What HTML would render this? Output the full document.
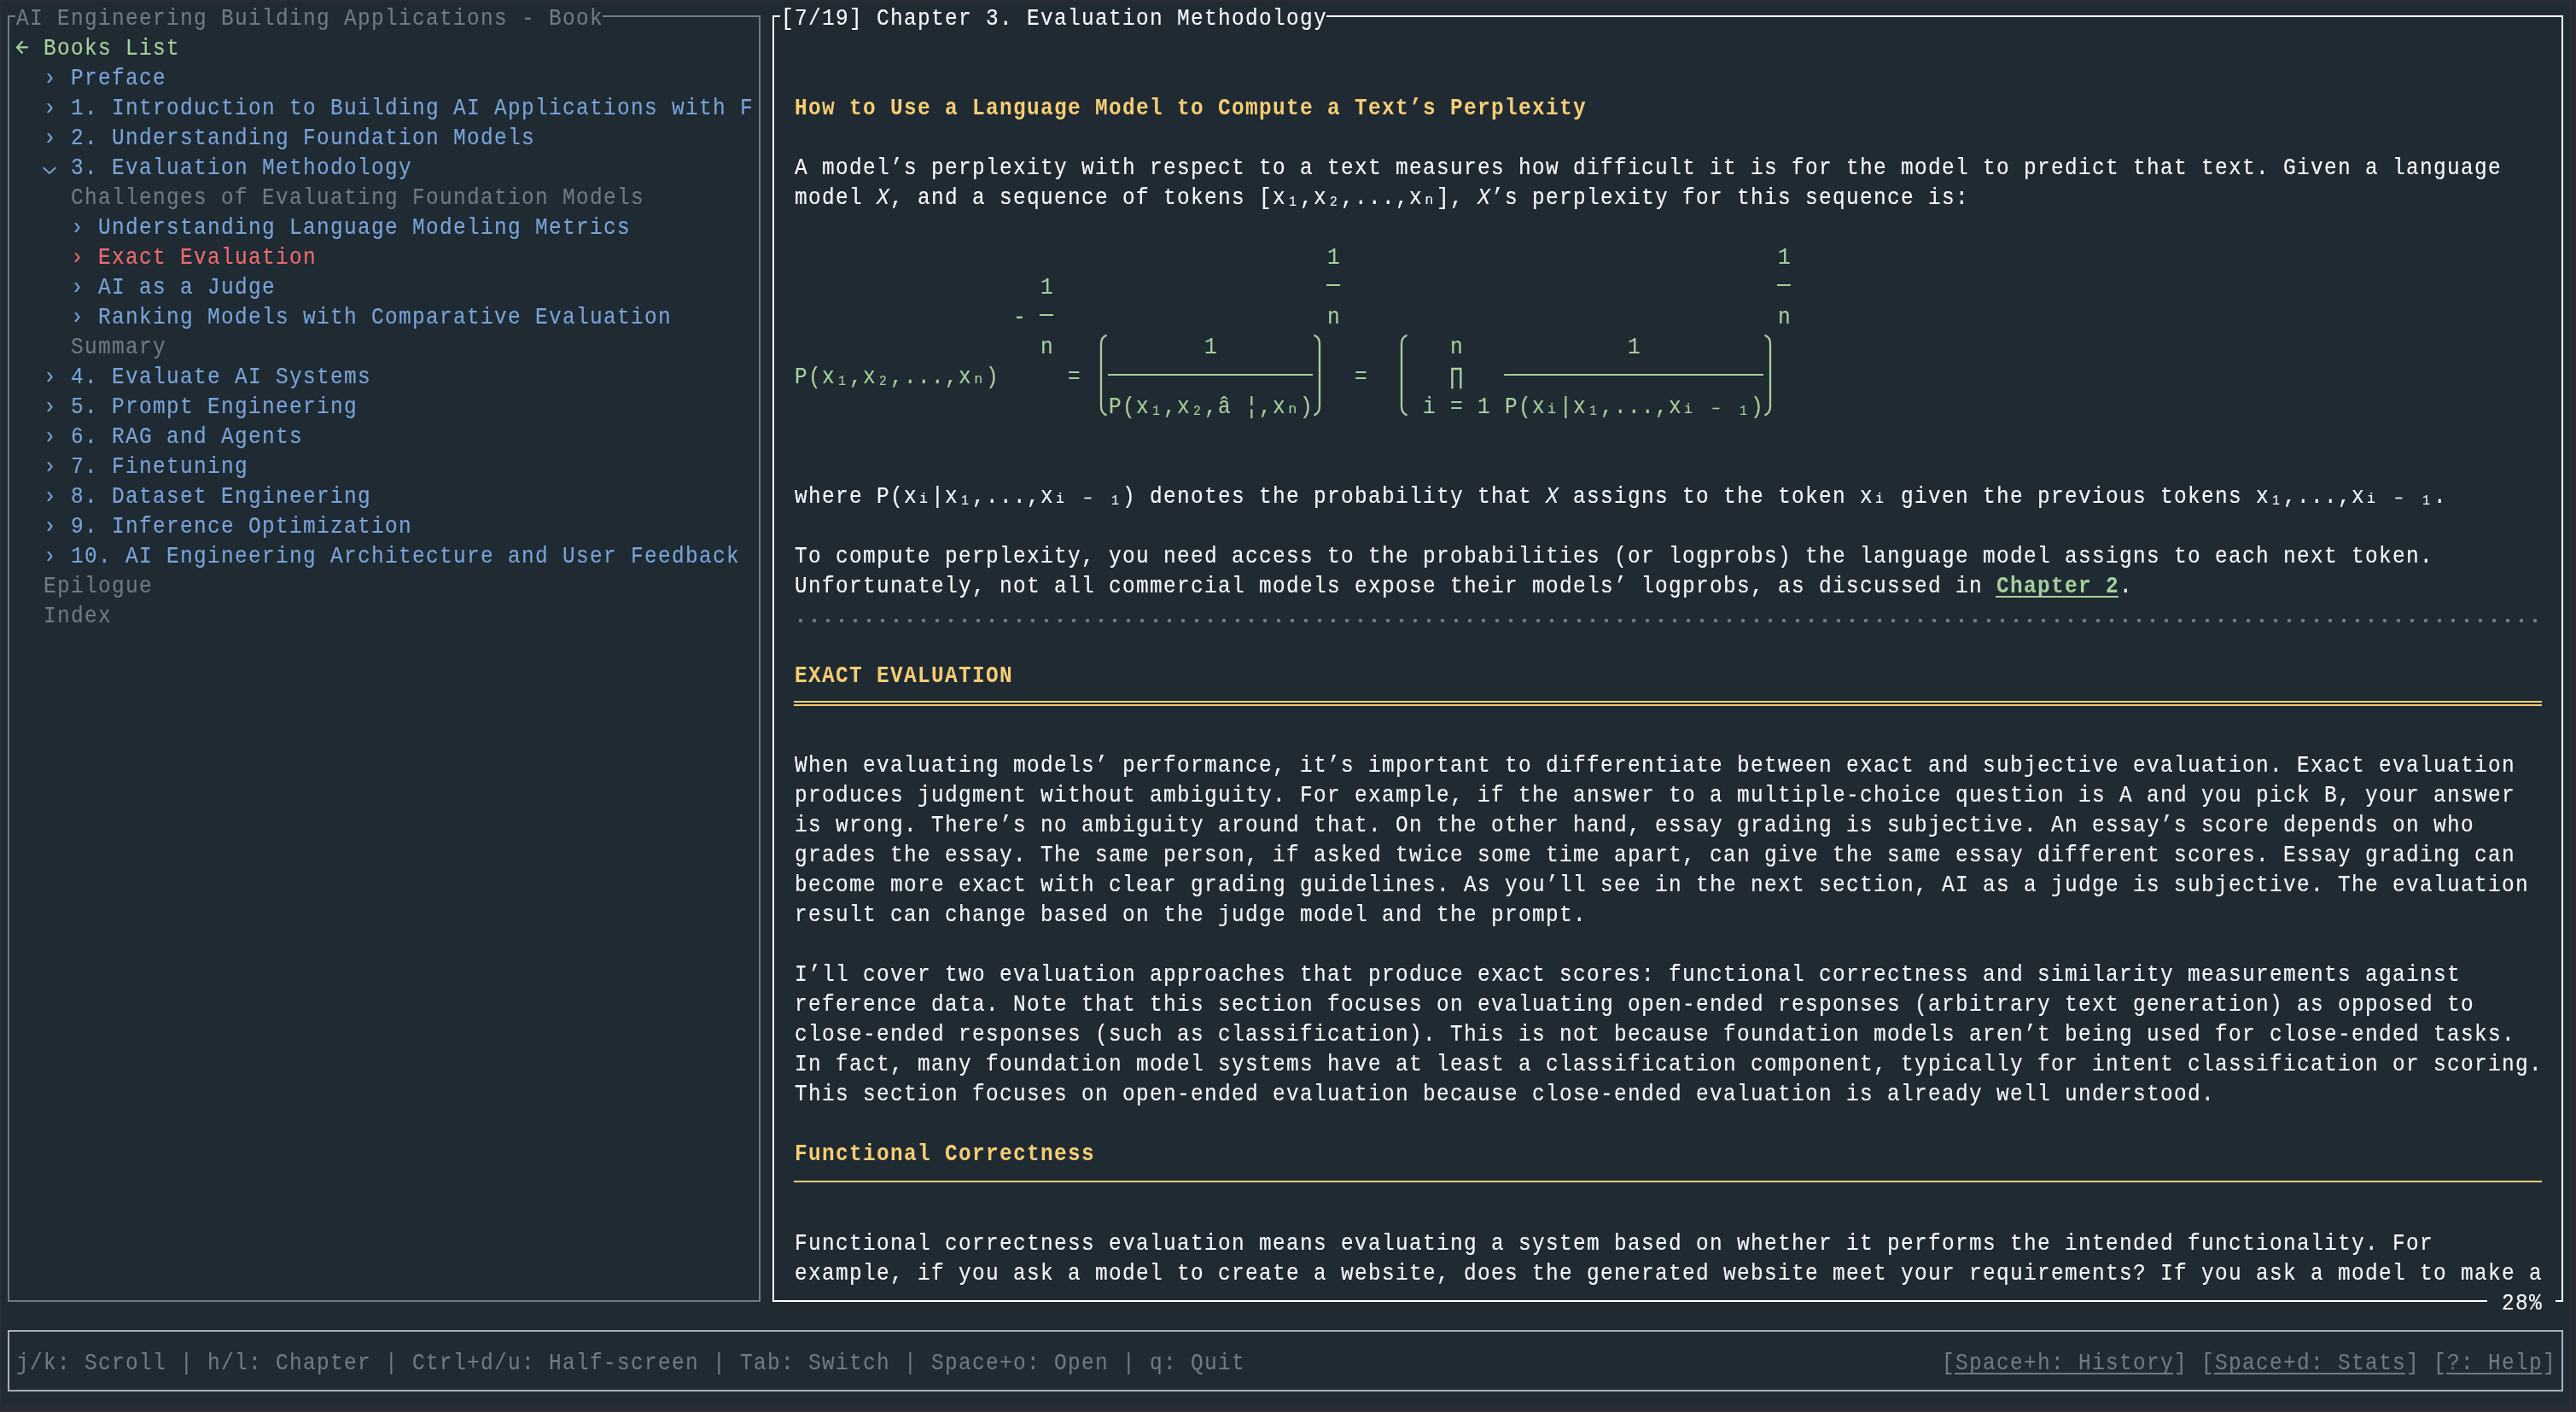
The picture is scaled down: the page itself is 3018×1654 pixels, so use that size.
<!DOCTYPE html>
<html><head><meta charset="utf-8"><style>
html,body{margin:0;padding:0;}
body{width:3018px;height:1654px;background:#292c35;position:relative;overflow:hidden;}
#term{position:absolute;left:2px;top:2px;width:3008px;height:1645px;background:#1f2a33;}
.t{position:absolute;white-space:pre;transform:scaleX(0.89);transform-origin:0 0;-webkit-text-stroke:0.15px currentColor;font-family:"Liberation Mono",monospace;font-size:27.5px;line-height:31.152px;letter-spacing:1.4748px;}
.b{position:absolute;}
.s{position:absolute;white-space:pre;font-family:"Liberation Mono",monospace;-webkit-text-stroke:0.2px currentColor;}
#lay{position:absolute;left:0;top:0;width:3018px;height:1654px;will-change:transform;}
</style></head><body><div id="term"></div>
<div id="lay">
<div class="b" style="left:9.00px;top:18.00px;width:882.00px;height:2px;background:#6f7b86"></div>
<div class="b" style="left:9.00px;top:1523.00px;width:882.00px;height:2px;background:#6f7b86"></div>
<div class="b" style="left:9.00px;top:18.00px;width:2px;height:1507.00px;background:#6f7b86"></div>
<div class="b" style="left:889.00px;top:18.00px;width:2px;height:1507.00px;background:#6f7b86"></div>
<div class="b" style="left:905.00px;top:18.00px;width:2098.00px;height:2px;background:#ffffff"></div>
<div class="b" style="left:905.00px;top:1523.00px;width:2098.00px;height:2px;background:#ffffff"></div>
<div class="b" style="left:905.00px;top:18.00px;width:2px;height:1507.00px;background:#ffffff"></div>
<div class="b" style="left:3001.00px;top:18.00px;width:2px;height:1507.00px;background:#ffffff"></div>
<div class="b" style="left:9.00px;top:1558.00px;width:2994.00px;height:2px;background:#a9b0ba"></div>
<div class="b" style="left:9.00px;top:1628.00px;width:2994.00px;height:2px;background:#a9b0ba"></div>
<div class="b" style="left:9.00px;top:1558.00px;width:2px;height:72.00px;background:#a9b0ba"></div>
<div class="b" style="left:3001.00px;top:1558.00px;width:2px;height:72.00px;background:#a9b0ba"></div>
<div class="b" style="left:18.00px;top:2.00px;width:688.00px;height:35.00px;background:#1f2a33"></div>
<span class="t" style="left:18.66px;top:5.61px;color:#6e7a85;">AI Engineering Building Applications - Book</span>
<div class="b" style="left:914.00px;top:2.00px;width:640.00px;height:35.00px;background:#1f2a33"></div>
<span class="t" style="left:914.66px;top:5.61px;color:#f6f8fb;">[7/19] Chapter 3. Evaluation Methodology</span>
<div class="b" style="left:2914.00px;top:1507.00px;width:80.00px;height:35.00px;background:#1f2a33"></div>
<span class="t" style="left:2930.66px;top:1510.61px;color:#f6f8fb;">28%</span>
<svg class="b" style="left:18.00px;top:37.00px" width="16" height="35"><path d="M8.6 11.2 L2 18.4 L8.6 25.6 M2 18.4 L14.8 18.4" fill="none" stroke="#a6cf9a" stroke-width="2.2" stroke-linejoin="miter"/></svg>
<span class="t" style="left:50.66px;top:40.61px;color:#a6cf9a;">Books List</span>
<span class="t" style="left:50.66px;top:75.61px;color:#79a3d6;">›</span>
<span class="t" style="left:82.66px;top:75.61px;color:#79a3d6;">Preface</span>
<span class="t" style="left:50.66px;top:110.61px;color:#79a3d6;">›</span>
<span class="t" style="left:82.66px;top:110.61px;color:#79a3d6;">1. Introduction to Building AI Applications with F</span>
<span class="t" style="left:50.66px;top:145.61px;color:#79a3d6;">›</span>
<span class="t" style="left:82.66px;top:145.61px;color:#79a3d6;">2. Understanding Foundation Models</span>
<svg class="b" style="left:50.00px;top:177.00px" width="16" height="35"><path d="M0.6 19.3 L8 26 L15.4 19.3" fill="none" stroke="#79a3d6" stroke-width="1.9"/></svg>
<span class="t" style="left:82.66px;top:180.61px;color:#79a3d6;">3. Evaluation Methodology</span>
<span class="t" style="left:82.66px;top:215.61px;color:#6e7a85;">Challenges of Evaluating Foundation Models</span>
<span class="t" style="left:82.66px;top:250.61px;color:#79a3d6;">›</span>
<span class="t" style="left:114.66px;top:250.61px;color:#79a3d6;">Understanding Language Modeling Metrics</span>
<span class="t" style="left:82.66px;top:285.61px;color:#ec6b6e;">›</span>
<span class="t" style="left:114.66px;top:285.61px;color:#ec6b6e;">Exact Evaluation</span>
<span class="t" style="left:82.66px;top:320.61px;color:#79a3d6;">›</span>
<span class="t" style="left:114.66px;top:320.61px;color:#79a3d6;">AI as a Judge</span>
<span class="t" style="left:82.66px;top:355.61px;color:#79a3d6;">›</span>
<span class="t" style="left:114.66px;top:355.61px;color:#79a3d6;">Ranking Models with Comparative Evaluation</span>
<span class="t" style="left:82.66px;top:390.61px;color:#6e7a85;">Summary</span>
<span class="t" style="left:50.66px;top:425.61px;color:#79a3d6;">›</span>
<span class="t" style="left:82.66px;top:425.61px;color:#79a3d6;">4. Evaluate AI Systems</span>
<span class="t" style="left:50.66px;top:460.61px;color:#79a3d6;">›</span>
<span class="t" style="left:82.66px;top:460.61px;color:#79a3d6;">5. Prompt Engineering</span>
<span class="t" style="left:50.66px;top:495.61px;color:#79a3d6;">›</span>
<span class="t" style="left:82.66px;top:495.61px;color:#79a3d6;">6. RAG and Agents</span>
<span class="t" style="left:50.66px;top:530.61px;color:#79a3d6;">›</span>
<span class="t" style="left:82.66px;top:530.61px;color:#79a3d6;">7. Finetuning</span>
<span class="t" style="left:50.66px;top:565.61px;color:#79a3d6;">›</span>
<span class="t" style="left:82.66px;top:565.61px;color:#79a3d6;">8. Dataset Engineering</span>
<span class="t" style="left:50.66px;top:600.61px;color:#79a3d6;">›</span>
<span class="t" style="left:82.66px;top:600.61px;color:#79a3d6;">9. Inference Optimization</span>
<span class="t" style="left:50.66px;top:635.61px;color:#79a3d6;">›</span>
<span class="t" style="left:82.66px;top:635.61px;color:#79a3d6;">10. AI Engineering Architecture and User Feedback</span>
<span class="t" style="left:50.66px;top:670.61px;color:#6e7a85;">Epilogue</span>
<span class="t" style="left:50.66px;top:705.61px;color:#6e7a85;">Index</span>
<span class="t" style="left:930.66px;top:110.61px;color:#f6cd73;font-weight:bold;-webkit-text-stroke:0;">How to Use a Language Model to Compute a Text’s Perplexity</span>
<span class="t" style="left:930.66px;top:180.61px;color:#f6f8fb;">A model’s perplexity with respect to a text measures how difficult it is for the model to predict that text. Given a language</span>
<span class="t" style="left:930.66px;top:215.61px;color:#f6f8fb;">model </span>
<span class="t" style="left:1026.66px;top:215.61px;color:#f6f8fb;font-style:italic;">X</span>
<span class="t" style="left:1042.66px;top:215.61px;color:#f6f8fb;">, and a sequence of tokens [x₁,x₂,...,xₙ], </span>
<span class="t" style="left:1730.66px;top:215.61px;color:#f6f8fb;font-style:italic;">X</span>
<span class="t" style="left:1746.66px;top:215.61px;color:#f6f8fb;">’s perplexity for this sequence is:</span>
<span class="t" style="left:1554.66px;top:285.61px;color:#a6cf9a;">1</span>
<span class="t" style="left:2082.66px;top:285.61px;color:#a6cf9a;">1</span>
<span class="t" style="left:1218.66px;top:320.61px;color:#a6cf9a;">1</span>
<div class="b" style="left:1554.00px;top:333.00px;width:16.00px;height:2px;background:#a6cf9a"></div>
<div class="b" style="left:2082.00px;top:333.00px;width:16.00px;height:2px;background:#a6cf9a"></div>
<span class="t" style="left:1186.66px;top:355.61px;color:#a6cf9a;">-</span>
<div class="b" style="left:1218.00px;top:368.00px;width:16.00px;height:2px;background:#a6cf9a"></div>
<span class="t" style="left:1554.66px;top:355.61px;color:#a6cf9a;">n</span>
<span class="t" style="left:2082.66px;top:355.61px;color:#a6cf9a;">n</span>
<span class="t" style="left:1218.66px;top:390.61px;color:#a6cf9a;">n</span>
<span class="t" style="left:1410.66px;top:390.61px;color:#a6cf9a;">1</span>
<span class="t" style="left:1698.66px;top:390.61px;color:#a6cf9a;">n</span>
<span class="t" style="left:1906.66px;top:390.61px;color:#a6cf9a;">1</span>
<span class="t" style="left:930.66px;top:425.61px;color:#a6cf9a;">P(x₁,x₂,...,xₙ)</span>
<span class="t" style="left:1250.66px;top:425.61px;color:#a6cf9a;">=</span>
<span class="t" style="left:1586.66px;top:425.61px;color:#a6cf9a;">=</span>
<span class="t" style="left:1698.66px;top:425.61px;color:#a6cf9a;">∏</span>
<span class="t" style="left:1298.66px;top:460.61px;color:#a6cf9a;">P(x₁,x₂,â ¦,xₙ)</span>
<span class="s" style="left:1813.05px;top:470.96px;color:#a6cf9a;font-size:16.5px;line-height:18.691px">i</span>
<span class="s" style="left:1973.05px;top:470.96px;color:#a6cf9a;font-size:16.5px;line-height:18.691px">i</span>
<span class="t" style="left:1666.66px;top:460.61px;color:#a6cf9a;">i = 1 P(x |x₁,...,x  ₋ ₁)</span>
<div class="b" style="left:1298.00px;top:438.00px;width:240.00px;height:2px;background:#a6cf9a"></div>
<div class="b" style="left:1762.00px;top:438.00px;width:304.00px;height:2px;background:#a6cf9a"></div>
<svg class="b" style="left:1282.00px;top:387.00px" width="16" height="105"><path d="M14.6 5.6 C10.5 7 8 10.5 8 16 L8 89.0 C8 94.5 10.5 98.0 14.6 99.4" fill="none" stroke="#a6cf9a" stroke-width="2.3"/></svg>
<svg class="b" style="left:1538.00px;top:387.00px" width="16" height="105"><path d="M1.4 5.6 C5.5 7 8 10.5 8 16 L8 89.0 C8 94.5 5.5 98.0 1.4 99.4" fill="none" stroke="#a6cf9a" stroke-width="2.3"/></svg>
<svg class="b" style="left:1634.00px;top:387.00px" width="16" height="105"><path d="M14.6 5.6 C10.5 7 8 10.5 8 16 L8 89.0 C8 94.5 10.5 98.0 14.6 99.4" fill="none" stroke="#a6cf9a" stroke-width="2.3"/></svg>
<svg class="b" style="left:2066.00px;top:387.00px" width="16" height="105"><path d="M1.4 5.6 C5.5 7 8 10.5 8 16 L8 89.0 C8 94.5 5.5 98.0 1.4 99.4" fill="none" stroke="#a6cf9a" stroke-width="2.3"/></svg>
<span class="s" style="left:1077.05px;top:575.96px;color:#f6f8fb;font-size:16.5px;line-height:18.691px">i</span>
<span class="s" style="left:1237.05px;top:575.96px;color:#f6f8fb;font-size:16.5px;line-height:18.691px">i</span>
<span class="t" style="left:930.66px;top:565.61px;color:#f6f8fb;">where P(x |x₁,...,x  ₋ ₁) denotes the probability that </span>
<span class="t" style="left:1810.66px;top:565.61px;color:#f6f8fb;font-style:italic;">X</span>
<span class="s" style="left:2197.05px;top:575.96px;color:#f6f8fb;font-size:16.5px;line-height:18.691px">i</span>
<span class="s" style="left:2773.05px;top:575.96px;color:#f6f8fb;font-size:16.5px;line-height:18.691px">i</span>
<span class="t" style="left:1826.66px;top:565.61px;color:#f6f8fb;"> assigns to the token x  given the previous tokens x₁,...,x  ₋ ₁.</span>
<span class="t" style="left:930.66px;top:635.61px;color:#f6f8fb;">To compute perplexity, you need access to the probabilities (or logprobs) the language model assigns to each next token.</span>
<span class="t" style="left:930.66px;top:670.61px;color:#f6f8fb;">Unfortunately, not all commercial models expose their models’ logprobs, as discussed in </span>
<span class="t" style="left:2338.66px;top:670.61px;color:#a6cf9a;font-weight:bold;-webkit-text-stroke:0;">Chapter 2</span>
<div class="b" style="left:2338.00px;top:698.00px;width:144.00px;height:2px;background:#a6cf9a"></div>
<span class="t" style="left:2482.66px;top:670.61px;color:#f6f8fb;">.</span>
<div class="b" style="left:930.00px;top:723.00px;width:2048.00px;height:8px;background:radial-gradient(circle at 8px 4px, #6e7a85 1.9px, rgba(0,0,0,0) 2.6px);background-size:16px 8px"></div>
<span class="t" style="left:930.66px;top:775.61px;color:#f6cd73;font-weight:bold;-webkit-text-stroke:0;">EXACT EVALUATION</span>
<div class="b" style="left:930.00px;top:821.00px;width:2048.00px;height:2px;background:#f6cd73"></div>
<div class="b" style="left:930.00px;top:825.00px;width:2048.00px;height:2px;background:#f6cd73"></div>
<span class="t" style="left:930.66px;top:880.61px;color:#f6f8fb;">When evaluating models’ performance, it’s important to differentiate between exact and subjective evaluation. Exact evaluation</span>
<span class="t" style="left:930.66px;top:915.61px;color:#f6f8fb;">produces judgment without ambiguity. For example, if the answer to a multiple-choice question is A and you pick B, your answer</span>
<span class="t" style="left:930.66px;top:950.61px;color:#f6f8fb;">is wrong. There’s no ambiguity around that. On the other hand, essay grading is subjective. An essay’s score depends on who</span>
<span class="t" style="left:930.66px;top:985.61px;color:#f6f8fb;">grades the essay. The same person, if asked twice some time apart, can give the same essay different scores. Essay grading can</span>
<span class="t" style="left:930.66px;top:1020.61px;color:#f6f8fb;">become more exact with clear grading guidelines. As you’ll see in the next section, AI as a judge is subjective. The evaluation</span>
<span class="t" style="left:930.66px;top:1055.61px;color:#f6f8fb;">result can change based on the judge model and the prompt.</span>
<span class="t" style="left:930.66px;top:1125.61px;color:#f6f8fb;">I’ll cover two evaluation approaches that produce exact scores: functional correctness and similarity measurements against</span>
<span class="t" style="left:930.66px;top:1160.61px;color:#f6f8fb;">reference data. Note that this section focuses on evaluating open-ended responses (arbitrary text generation) as opposed to</span>
<span class="t" style="left:930.66px;top:1195.61px;color:#f6f8fb;">close-ended responses (such as classification). This is not because foundation models aren’t being used for close-ended tasks.</span>
<span class="t" style="left:930.66px;top:1230.61px;color:#f6f8fb;">In fact, many foundation model systems have at least a classification component, typically for intent classification or scoring.</span>
<span class="t" style="left:930.66px;top:1265.61px;color:#f6f8fb;">This section focuses on open-ended evaluation because close-ended evaluation is already well understood.</span>
<span class="t" style="left:930.66px;top:1335.61px;color:#f6cd73;font-weight:bold;-webkit-text-stroke:0;">Functional Correctness</span>
<div class="b" style="left:930.00px;top:1383.00px;width:2048.00px;height:2px;background:#f6cd73"></div>
<span class="t" style="left:930.66px;top:1440.61px;color:#f6f8fb;">Functional correctness evaluation means evaluating a system based on whether it performs the intended functionality. For</span>
<span class="t" style="left:930.66px;top:1475.61px;color:#f6f8fb;">example, if you ask a model to create a website, does the generated website meet your requirements? If you ask a model to make a</span>
<span class="t" style="left:18.66px;top:1580.61px;color:#6e7a85;">j/k: Scroll | h/l: Chapter | Ctrl+d/u: Half-screen | Tab: Switch | Space+o: Open | q: Quit</span>
<span class="t" style="left:2274.66px;top:1580.61px;color:#6e7a85;">[</span>
<span class="t" style="left:2290.66px;top:1580.61px;color:#6e7a85;">Space+h: History</span>
<div class="b" style="left:2290.00px;top:1608.00px;width:256.00px;height:2px;background:#6e7a85"></div>
<span class="t" style="left:2546.66px;top:1580.61px;color:#6e7a85;">]</span>
<span class="t" style="left:2578.66px;top:1580.61px;color:#6e7a85;">[</span>
<span class="t" style="left:2594.66px;top:1580.61px;color:#6e7a85;">Space+d: Stats</span>
<div class="b" style="left:2594.00px;top:1608.00px;width:224.00px;height:2px;background:#6e7a85"></div>
<span class="t" style="left:2818.66px;top:1580.61px;color:#6e7a85;">]</span>
<span class="t" style="left:2850.66px;top:1580.61px;color:#6e7a85;">[</span>
<span class="t" style="left:2866.66px;top:1580.61px;color:#6e7a85;">?: Help</span>
<div class="b" style="left:2866.00px;top:1608.00px;width:112.00px;height:2px;background:#6e7a85"></div>
<span class="t" style="left:2978.66px;top:1580.61px;color:#6e7a85;">]</span>
</div>
</body></html>
